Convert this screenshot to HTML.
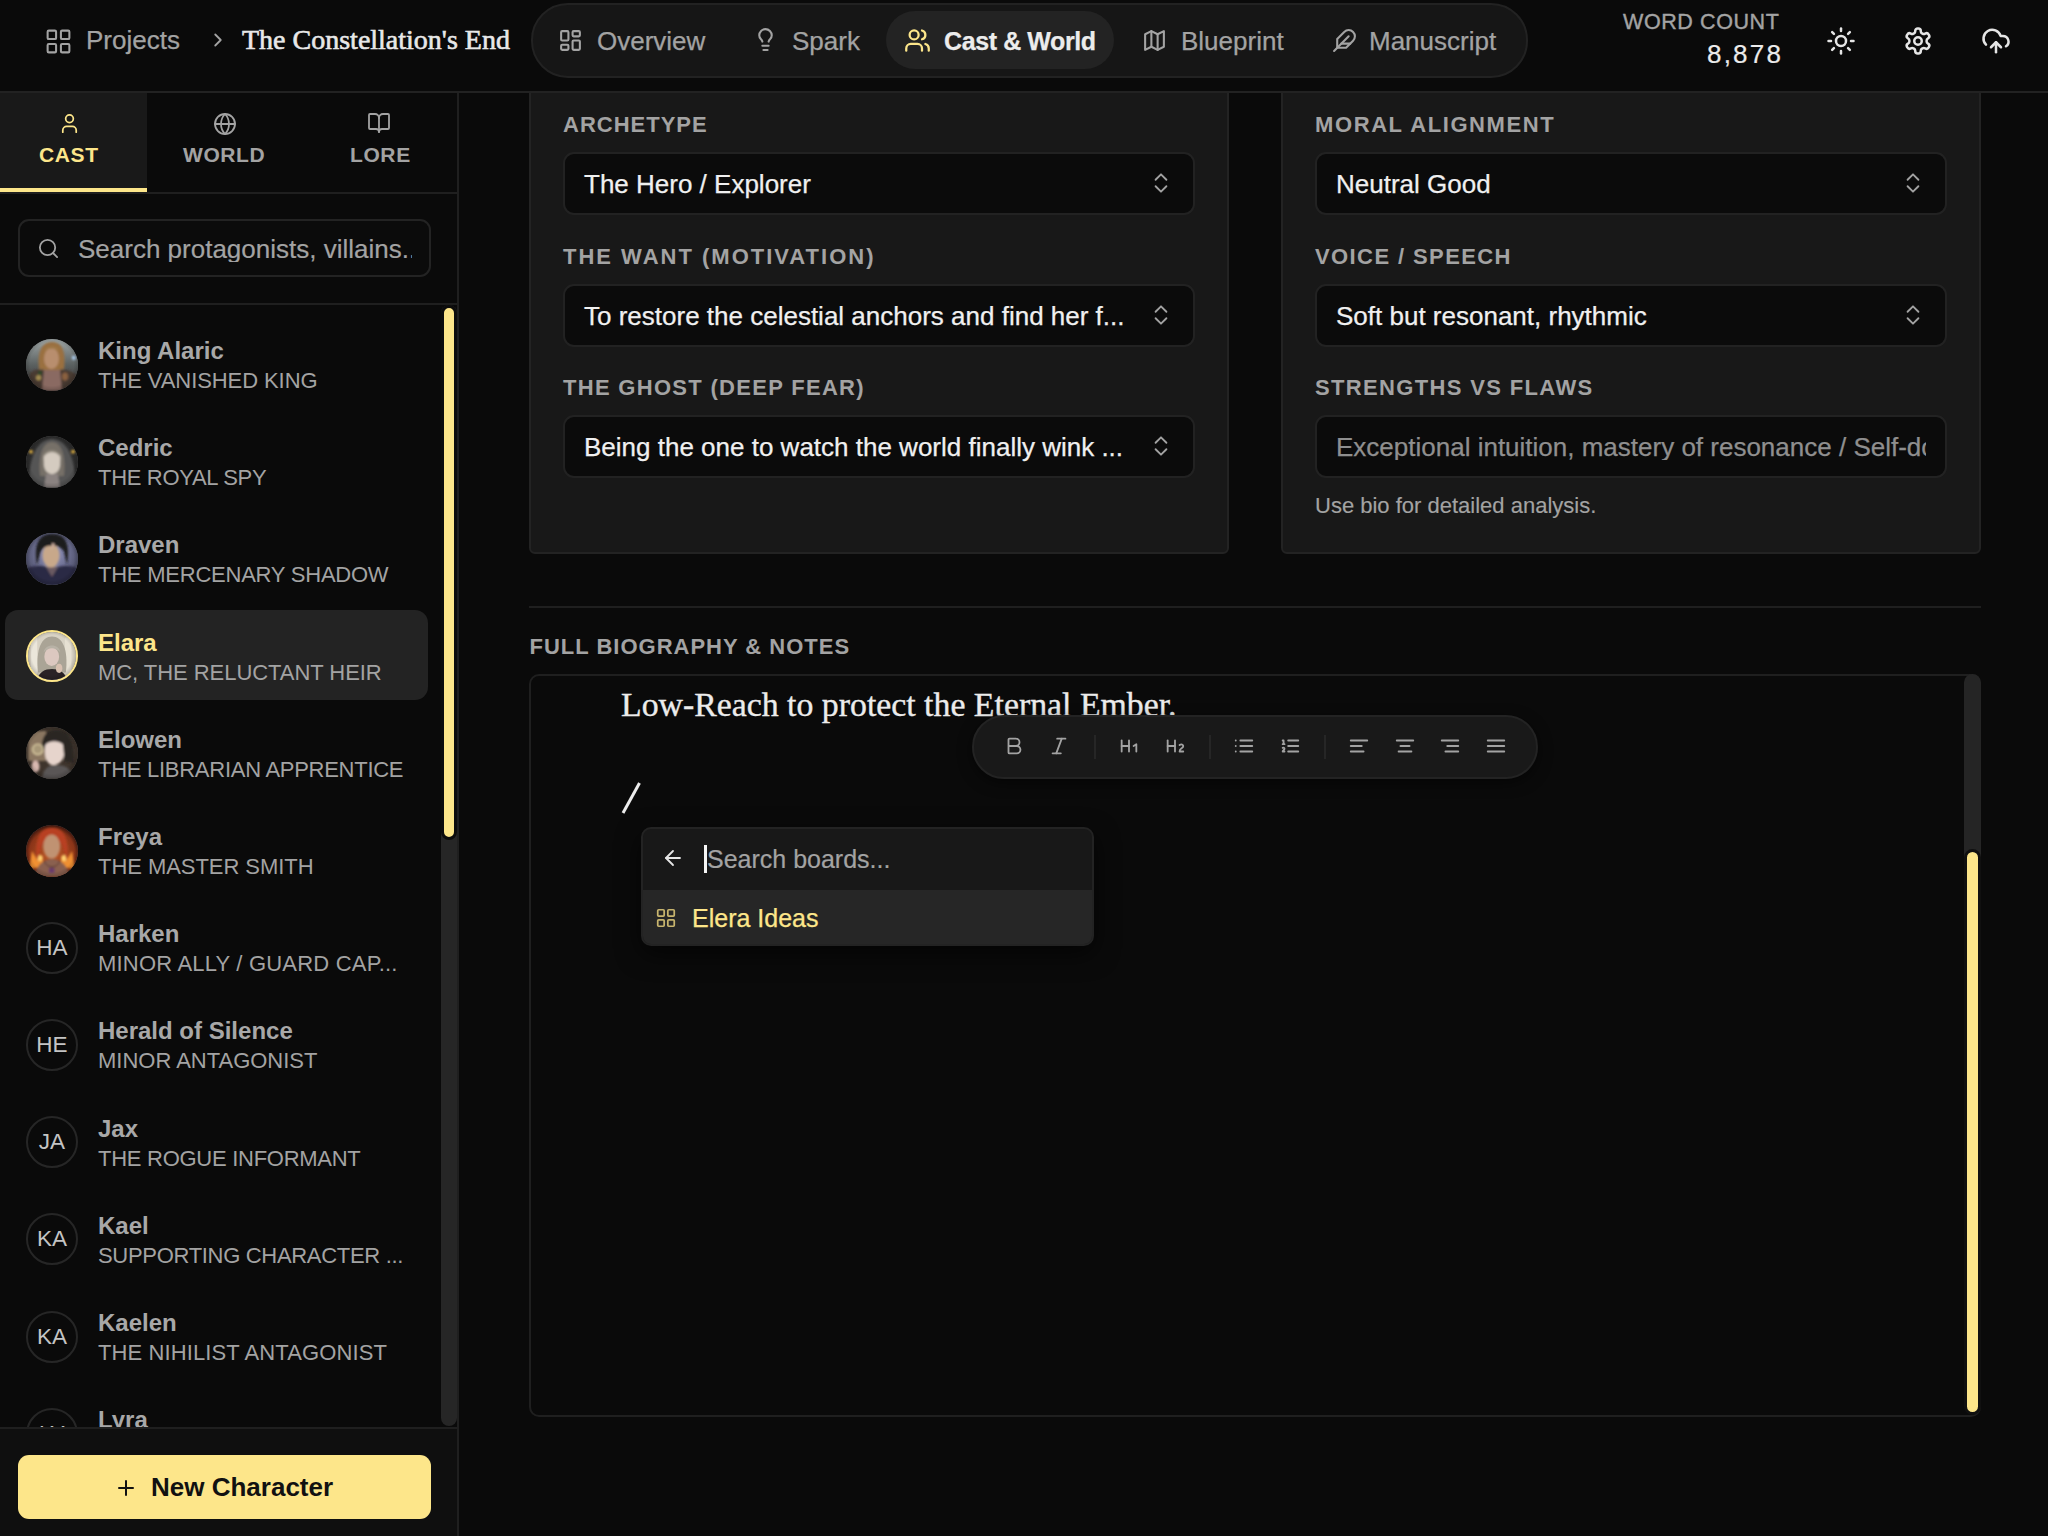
<!DOCTYPE html>
<html><head><meta charset="utf-8">
<style>
*{box-sizing:border-box;margin:0;padding:0}
html,body{width:2048px;height:1536px;overflow:hidden;background:#0a0a0a;font-family:"Liberation Sans",sans-serif;color:#e5e5e5}
.abs{position:absolute}
svg.i{fill:none;stroke:currentColor;stroke-width:2;stroke-linecap:round;stroke-linejoin:round;position:absolute}
.t{position:absolute;white-space:nowrap;line-height:1}
/* header */
#hdr{position:absolute;left:0;top:0;width:2048px;height:93px;background:#0a0a0a;border-bottom:2px solid #222}
#nav{position:absolute;left:531px;top:3px;width:997px;height:75px;border-radius:37px;background:#161616;border:2px solid #222}
#navact{position:absolute;left:886px;top:11px;width:228px;height:58px;border-radius:29px;background:#232323}
.nv{color:#a3a3a3;font-size:26px;-webkit-text-stroke:0.25px currentColor}
/* sidebar */
#side{position:absolute;left:0;top:93px;width:459px;height:1443px;background:#0a0a0a;border-right:2px solid #1f1f1f}
.tab{font-size:21px;font-weight:bold;letter-spacing:0.6px;color:#a3a3a3}
.av{position:absolute;left:26px;width:52px;height:52px;border-radius:50%;overflow:hidden;background:#555}
.av svg{display:block;width:100%;height:100%}
.av:not(.avi)::after{content:"";position:absolute;inset:0;border-radius:50%;background:radial-gradient(circle at 50% 48%,rgba(0,0,0,0) 58%,rgba(0,0,0,.6) 100%)}
.avi{background:#0a0a0a;border:2px solid #262626;color:#c4c4c4;font-size:22.5px;text-align:center;line-height:47px}
.nm{left:98px;font-size:24px;font-weight:bold;color:#a8a8a8}
.rl{left:98px;font-size:22px;color:#a3a3a3;letter-spacing:-0.25px}
.card{position:absolute;width:700px;background:#181818;border:2px solid #232323;border-radius:6px}
.lbl{font-size:22px;font-weight:bold;color:#a3a3a3}
.sel{position:absolute;width:632px;height:63px;background:#0b0b0b;border:2px solid #222;border-radius:11px}
.stx{font-size:26px;-webkit-text-stroke:0.25px currentColor}
</style></head>
<body>
<svg width="0" height="0" style="position:absolute"><defs><filter id="bl" x="-10%" y="-10%" width="120%" height="120%"><feGaussianBlur stdDeviation="0.8"/></filter></defs></svg>
<div id="hdr">
  <svg class="i" style="left:44px;top:26.5px;width:29px;height:29px;color:#a3a3a3;stroke-width:1.7" viewBox="0 0 24 24"><rect width="7" height="7" x="3" y="3" rx="1"/><rect width="7" height="7" x="14" y="3" rx="1"/><rect width="7" height="7" x="14" y="14" rx="1"/><rect width="7" height="7" x="3" y="14" rx="1"/></svg>
  <div class="t nv" style="left:86px;top:27.2px">Projects</div>
  <svg class="i" style="left:207px;top:29px;width:22px;height:22px;color:#a3a3a3" viewBox="0 0 24 24"><path d="m9 18 6-6-6-6"/></svg>
  <div class="t" id="title" style="left:242px;top:26.3px;font-family:'Liberation Serif',serif;font-size:28px;letter-spacing:0px;color:#e8e8e8;-webkit-text-stroke:0.6px #e8e8e8">The Constellation's End</div>

  <div id="nav"></div>
  <div id="navact"></div>
  <svg class="i" style="left:558px;top:28px;width:25px;height:25px;color:#a3a3a3" viewBox="0 0 24 24"><rect width="7" height="9" x="3" y="3" rx="1"/><rect width="7" height="5" x="14" y="3" rx="1"/><rect width="7" height="9" x="14" y="12" rx="1"/><rect width="7" height="5" x="3" y="16" rx="1"/></svg>
  <div class="t nv" style="left:597px;top:28px">Overview</div>
  <svg class="i" style="left:753px;top:27px;width:25px;height:25px;color:#a3a3a3" viewBox="0 0 24 24"><path d="M15 14c.2-1 .7-1.7 1.5-2.5 1-.9 1.5-2.2 1.5-3.5A6 6 0 0 0 6 8c0 1 .2 2.2 1.5 3.5.7.7 1.3 1.5 1.5 2.5"/><path d="M9 18h6"/><path d="M10 22h4"/></svg>
  <div class="t nv" style="left:792px;top:28px">Spark</div>
  <svg class="i" style="left:904px;top:27px;width:27px;height:27px;color:#fde68a" viewBox="0 0 24 24"><path d="M16 21v-2a4 4 0 0 0-4-4H6a4 4 0 0 0-4 4v2"/><circle cx="9" cy="7" r="4"/><path d="M22 21v-2a4 4 0 0 0-3-3.87"/><path d="M16 3.13a4 4 0 0 1 0 7.75"/></svg>
  <div class="t nv" style="left:944px;top:28.5px;color:#ececec;font-weight:bold;font-size:25px;letter-spacing:-0.4px">Cast &amp; World</div>
  <svg class="i" style="left:1142px;top:28px;width:25px;height:25px;color:#a3a3a3" viewBox="0 0 24 24"><polygon points="3 6 9 3 15 6 21 3 21 18 15 21 9 18 3 21"/><line x1="9" x2="9" y1="3" y2="18"/><line x1="15" x2="15" y1="6" y2="21"/></svg>
  <div class="t nv" style="left:1181px;top:28px">Blueprint</div>
  <svg class="i" style="left:1332px;top:28px;width:25px;height:25px;color:#a3a3a3" viewBox="0 0 24 24"><path d="M20.24 12.24a6 6 0 0 0-8.49-8.49L5 10.5V19h8.5z"/><line x1="16" x2="2" y1="8" y2="22"/><line x1="17.5" x2="9" y1="15" y2="15"/></svg>
  <div class="t nv" style="left:1369px;top:28px">Manuscript</div>

  <div class="t" style="left:1623px;top:12.4px;font-size:21.5px;letter-spacing:0.6px;color:#a3a3a3;-webkit-text-stroke:0.4px currentColor">WORD COUNT</div>
  <div class="t" style="left:1707px;top:41px;font-size:26px;letter-spacing:2.2px;color:#ececec;-webkit-text-stroke:0.2px currentColor">8,878</div>
  <svg class="i" style="left:1826px;top:26px;width:30px;height:30px;color:#e5e5e5" viewBox="0 0 24 24"><circle cx="12" cy="12" r="4"/><path d="M12 2v2"/><path d="M12 20v2"/><path d="m4.93 4.93 1.410 1.410"/><path d="m17.66 17.66 1.410 1.410"/><path d="M2 12h2"/><path d="M20 12h2"/><path d="m6.34 17.66-1.410 1.410"/><path d="m19.07 4.93-1.410 1.410"/></svg>
  <svg class="i" style="left:1903px;top:26px;width:30px;height:30px;color:#e5e5e5" viewBox="0 0 24 24"><path d="M12.22 2h-.44a2 2 0 0 0-2 2v.18a2 2 0 0 1-1 1.73l-.43.25a2 2 0 0 1-2 0l-.15-.08a2 2 0 0 0-2.73.73l-.22.38a2 2 0 0 0 .73 2.73l.15.1a2 2 0 0 1 1 1.72v.51a2 2 0 0 1-1 1.74l-.15.09a2 2 0 0 0-.73 2.73l.22.38a2 2 0 0 0 2.73.73l.15-.08a2 2 0 0 1 2 0l.43.25a2 2 0 0 1 1 1.73V20a2 2 0 0 0 2 2h.44a2 2 0 0 0 2-2v-.18a2 2 0 0 1 1-1.73l.43-.25a2 2 0 0 1 2 0l.15.08a2 2 0 0 0 2.73-.73l.22-.39a2 2 0 0 0-.73-2.730l-.15-.08a2 2 0 0 1-1-1.74v-.5a2 2 0 0 1 1-1.74l.15-.09a2 2 0 0 0 .73-2.73l-.22-.38a2 2 0 0 0-2.73-.73l-.15.08a2 2 0 0 1-2 0l-.43-.25a2 2 0 0 1-1-1.73V4a2 2 0 0 0-2-2z"/><circle cx="12" cy="12" r="3"/></svg>
  <svg class="i" style="left:1981px;top:26px;width:30px;height:30px;color:#e5e5e5" viewBox="0 0 24 24"><path d="M12 13v8"/><path d="M4 14.899A7 7 0 1 1 15.71 8h1.79a4.5 4.5 0 0 1 2.5 8.242"/><path d="m8 17 4-4 4 4"/></svg>
</div>

<div id="side">
</div>
<div class="abs" style="left:0;top:93px;width:147px;height:99px;background:#191919"></div>
<div class="abs" style="left:0;top:188px;width:147px;height:4px;background:#fde68a"></div>
<div class="abs" style="left:0;top:192px;width:457px;height:2px;background:#1f1f1f"></div>
<svg class="i" style="left:58px;top:112px;width:23px;height:23px;color:#fde68a;stroke-width:1.8" viewBox="0 0 24 24"><path d="M19 21v-2a4 4 0 0 0-4-4H9a4 4 0 0 0-4 4v2"/><circle cx="12" cy="7" r="4"/></svg>
<div class="t tab" style="left:39px;top:144px;color:#fde68a">CAST</div>
<svg class="i" style="left:213px;top:112px;width:24px;height:24px;color:#a3a3a3;stroke-width:1.8" viewBox="0 0 24 24"><circle cx="12" cy="12" r="10"/><path d="M12 2a14.5 14.5 0 0 0 0 20 14.5 14.5 0 0 0 0-20"/><path d="M2 12h20"/></svg>
<div class="t tab" style="left:183px;top:144px">WORLD</div>
<svg class="i" style="left:367px;top:111px;width:24px;height:24px;color:#a3a3a3;stroke-width:1.8" viewBox="0 0 24 24"><path d="M12 7v14"/><path d="M3 18a1 1 0 0 1-1-1V4a1 1 0 0 1 1-1h5a4 4 0 0 1 4 4 4 4 0 0 1 4-4h5a1 1 0 0 1 1 1v13a1 1 0 0 1-1 1h-6a3 3 0 0 0-3 3 3 3 0 0 0-3-3z"/></svg>
<div class="t tab" style="left:350px;top:144px">LORE</div>

<div class="abs" style="left:18px;top:219px;width:413px;height:58px;border:2px solid #232323;border-radius:11px;background:#0b0b0b"></div>
<svg class="i" style="left:37px;top:237px;width:23px;height:23px;color:#a3a3a3;stroke-width:1.9" viewBox="0 0 24 24"><circle cx="11" cy="11" r="8"/><path d="m21 21-4.3-4.3"/></svg>
<div class="t" style="left:78px;top:235.5px;font-size:26px;color:#a3a3a3;width:334px;overflow:hidden;-webkit-text-stroke:0.2px currentColor">Search protagonists, villains...</div>
<div class="abs" style="left:0;top:303px;width:457px;height:2px;background:#1f1f1f"></div>

<div id="list" class="abs" style="left:0;top:305px;width:457px;height:1122px;overflow:hidden">
<div class="abs" style="left:441px;top:0;width:16px;height:1121px;background:#262626;border-radius:8px"></div>
<div class="abs" style="left:441px;top:0;width:16px;height:535px;background:#fde68a;border:3px solid #0c0c0c;border-radius:8px"></div>
<div class="abs" style="left:5px;top:305px;width:423px;height:90px;background:#232323;border-radius:13px"></div>
<div class="av img1" style="top:33.5px"><svg viewBox="0 0 52 52"><defs><linearGradient id="g1" x1="0" y1="0" x2="0" y2="1"><stop offset="0" stop-color="#a0a8a8"/><stop offset=".5" stop-color="#5a6060"/><stop offset="1" stop-color="#302828"/></linearGradient></defs>
<rect width="52" height="52" fill="url(#g1)"/><g filter="url(#bl)">
<path d="M2 52 L4 34 C8 30 14 30 18 31 L34 31 C40 30 46 32 50 36 L50 52 Z" fill="#4a3a32"/>
<path d="M18 31 L34 31 L36 52 L16 52 Z" fill="#8a6a62"/>
<path d="M13 30 C11 12 16 3 26 3 C36 3 40 12 38 30 L33 31 L19 31 Z" fill="#9a7040"/>
<ellipse cx="25.5" cy="19.5" rx="7.5" ry="10.5" fill="#b88e6e"/>
<path d="M18 12 C20 6 32 6 34 12 C30 9 22 9 18 12 Z" fill="#a07a48"/>
<circle cx="48" cy="18.7" r="2.2" fill="#a8c8e8"/>
<circle cx="12.6" cy="38.7" r="2.6" fill="#a08a50"/>
<ellipse cx="39" cy="37.6" rx="3" ry="4" fill="#8a6040"/>
<circle cx="14" cy="34" r="2" fill="#2a4a2a"/>
</g></svg></div>
<div class="t nm" style="top:34.0px">King Alaric</div>
<div class="t rl" style="top:65.0px;letter-spacing:-0.08px">THE VANISHED KING</div>
<div class="av img2" style="top:130.7px"><svg viewBox="0 0 52 52"><rect width="52" height="52" fill="#2c2c2c"/><g filter="url(#bl)">
<path d="M3 52 C2 28 8 4 26 3 C44 4 50 28 49 52 Z" fill="#555555"/>
<path d="M14 40 C12 18 17 6 26 6 C35 6 40 18 38 40 Z" fill="#767068"/>
<path d="M17.5 20 C18 14 34 14 34.5 20 L34 30 C33 36 29 38 26 38 C23 38 19 36 18 30 Z" fill="#d4cbc0"/>
<path d="M17 22 C18 11 34 11 35 22 C31 14 21 14 17 22 Z" fill="#8a8478"/>
<path d="M20 38 L32 38 L34 52 L18 52 Z" fill="#8a8280"/>
<circle cx="4.8" cy="15.7" r="1.9" fill="#e0b040"/><circle cx="47.2" cy="15.7" r="1.9" fill="#e0b040"/>
</g></svg></div>
<div class="t nm" style="top:131.2px">Cedric</div>
<div class="t rl" style="top:162.2px;letter-spacing:-0.31px">THE ROYAL SPY</div>
<div class="av img3" style="top:227.9px"><svg viewBox="0 0 52 52"><defs><radialGradient id="g3" cx="50%" cy="40%" r="60%"><stop offset="0" stop-color="#9a9cc8"/><stop offset="1" stop-color="#44465e"/></radialGradient></defs>
<rect width="52" height="52" fill="url(#g3)"/><g filter="url(#bl)">
<path d="M0 52 L0 36 C8 32 16 33 20 34 L32 34 C38 33 46 32 52 36 L52 52 Z" fill="#2c2a44"/>
<path d="M20 34 L32 34 L26 44 Z" fill="#6a5a62"/>
<ellipse cx="25" cy="22.5" rx="8.5" ry="12" fill="#c8a88a"/>
<path d="M11 32 C7 8 15 1 26 1 C38 1 45 8 41 32 L38 18 C34 13 30 12 26 13 C22 12 16 14 14 20 Z" fill="#1a1a1e"/>
<path d="M26 10 L29 11 L25 18 Z" fill="#d0b0a0"/>
</g></svg></div>
<div class="t nm" style="top:228.4px">Draven</div>
<div class="t rl" style="top:259.4px;letter-spacing:-0.23px">THE MERCENARY SHADOW</div>
<div class="av img4" style="top:325.1px;border:2px solid #fde68a"><svg viewBox="0 0 52 52"><rect width="52" height="52" fill="#d8d2c4"/><g filter="url(#bl)">
<rect x="3" y="6" width="7" height="40" fill="#ebe6da"/><rect x="40" y="6" width="7" height="40" fill="#e6e0d2"/>
<path d="M11 44 C8 18 15 5 26 5 C37 5 44 18 41 44 Z" fill="#aaa496"/>
<ellipse cx="25.7" cy="26.7" rx="8" ry="10" fill="#dcc8c0"/>
<path d="M17 22 C18 12 34 12 35 22 C30 16 22 16 17 22 Z" fill="#b8b2a6"/>
<path d="M10 52 C12 43 18 40 26 40 C34 40 40 43 42 52 Z" fill="#2a2426"/>
<ellipse cx="33.7" cy="39.4" rx="3.5" ry="5" fill="#d8c0b0"/>
</g></svg></div>
<div class="t nm" style="top:325.6px;color:#fde68a">Elara</div>
<div class="t rl" style="top:356.6px;letter-spacing:-0.05px">MC, THE RELUCTANT HEIR</div>
<div class="av img5" style="top:422.3px"><svg viewBox="0 0 52 52"><rect width="52" height="52" fill="#3e342c"/><g filter="url(#bl)">
<rect x="2" y="4" width="18" height="30" fill="#8a7660"/>
<path d="M16 26 C14 8 22 2 32 3 C44 4 48 14 48 36 L38 34 C38 20 32 14 22 16 Z" fill="#2a2624"/>
<path d="M19 20 C19 12 34 10 37 18 L38 28 C37 35 31 38 27 38 C22 38 19 32 19 26 Z" fill="#e6d4cc"/>
<path d="M19 18 C22 10 34 8 38 18 C32 13 24 13 19 18 Z" fill="#2e2826"/>
<circle cx="11.8" cy="22.3" r="5.2" fill="#a89878" stroke="#d8c8a0" stroke-width="1.4"/>
<ellipse cx="9.5" cy="39.5" rx="4" ry="6" fill="#d8b8b0"/>
<path d="M16 52 C17 42 22 38 30 38 C40 38 46 42 48 52 Z" fill="#5a5656"/>
</g></svg></div>
<div class="t nm" style="top:422.8px">Elowen</div>
<div class="t rl" style="top:453.8px;letter-spacing:-0.27px">THE LIBRARIAN APPRENTICE</div>
<div class="av img6" style="top:519.5px"><svg viewBox="0 0 52 52"><defs><radialGradient id="g6" cx="50%" cy="55%" r="55%"><stop offset="0" stop-color="#c05a28"/><stop offset=".8" stop-color="#8a3418"/><stop offset="1" stop-color="#401810"/></radialGradient></defs>
<rect width="52" height="52" fill="url(#g6)"/><g filter="url(#bl)">
<path d="M3 44 L6 26 L12 36 L16 30 L18 42 Z" fill="#f09030"/><path d="M49 44 L46 26 L40 36 L36 30 L34 42 Z" fill="#f09030"/>
<circle cx="13.7" cy="33" r="3" fill="#ffd070"/><circle cx="38.3" cy="33" r="3" fill="#ffd070"/>
<path d="M11 36 C8 10 16 3 26 3 C36 3 44 10 41 36 L36 20 C32 13 20 13 16 20 Z" fill="#b84020"/>
<ellipse cx="25.7" cy="21.5" rx="8.5" ry="12" fill="#c09272"/>
<path d="M8 52 C10 40 18 34 26 34 C34 34 42 40 44 52 Z" fill="#8a6050"/>
<path d="M18 36 C22 44 30 44 34 36" stroke="#4a3028" stroke-width="1" fill="none"/>
<rect x="23" y="43" width="5.4" height="5" fill="#6a3a6a"/>
</g></svg></div>
<div class="t nm" style="top:520.0px">Freya</div>
<div class="t rl" style="top:551.0px;letter-spacing:-0.05px">THE MASTER SMITH</div>
<div class="av avi" style="top:616.7px">HA</div>
<div class="t nm" style="top:617.2px">Harken</div>
<div class="t rl" style="top:648.2px;letter-spacing:0.2px">MINOR ALLY / GUARD CAP...</div>
<div class="av avi" style="top:713.9px">HE</div>
<div class="t nm" style="top:714.4px">Herald of Silence</div>
<div class="t rl" style="top:745.4px;letter-spacing:-0.01px">MINOR ANTAGONIST</div>
<div class="av avi" style="top:811.1px">JA</div>
<div class="t nm" style="top:811.6px">Jax</div>
<div class="t rl" style="top:842.6px;letter-spacing:-0.27px">THE ROGUE INFORMANT</div>
<div class="av avi" style="top:908.3px">KA</div>
<div class="t nm" style="top:908.8px">Kael</div>
<div class="t rl" style="top:939.8px;letter-spacing:-0.31px">SUPPORTING CHARACTER ...</div>
<div class="av avi" style="top:1005.5px">KA</div>
<div class="t nm" style="top:1006.0px">Kaelen</div>
<div class="t rl" style="top:1037.0px;letter-spacing:0.11px">THE NIHILIST ANTAGONIST</div>
<div class="av avi" style="top:1102.7px">LY</div>
<div class="t nm" style="top:1103.2px">Lyra</div>
</div>
<div class="abs" style="left:0;top:1427px;width:457px;height:109px;background:#0f0f0f;border-top:2px solid #1f1f1f"></div>
<div class="abs" style="left:18px;top:1455px;width:413px;height:64px;background:#fde68a;border-radius:11px"></div>
<svg class="i" style="left:114px;top:1476px;width:24px;height:24px;color:#111;stroke-width:2" viewBox="0 0 24 24"><path d="M5 12h14"/><path d="M12 5v14"/></svg>
<div class="t" style="left:151px;top:1474px;font-size:26px;font-weight:bold;color:#111">New Character</div>

<div id="main" class="abs" style="left:0;top:93px;width:2048px;height:1443px;overflow:hidden;clip-path:inset(0 0 0 459px)">
<div class="abs" style="left:0;top:-93px;width:2048px;height:1536px">
<div class="card" style="left:529px;top:60px;height:494px"></div>
<div class="card" style="left:1281px;top:60px;height:494px"></div>
<div class="t lbl" style="left:563px;top:114.4px;letter-spacing:1px">ARCHETYPE</div>
<div class="sel" style="left:563px;top:152px"></div>
<div class="t stx" style="left:584px;top:171.4px;color:#f0f0f0">The Hero / Explorer</div>
<svg class="i" style="left:1148px;top:170px;width:26px;height:26px;color:#a3a3a3;stroke-width:1.7" viewBox="0 0 24 24"><path d="m7 15 5 5 5-5"/><path d="m7 9 5-5 5 5"/></svg>
<div class="t lbl" style="left:1315px;top:114.4px;letter-spacing:1.6px">MORAL ALIGNMENT</div>
<div class="sel" style="left:1315px;top:152px"></div>
<div class="t stx" style="left:1336px;top:171.4px;color:#f0f0f0">Neutral Good</div>
<svg class="i" style="left:1900px;top:170px;width:26px;height:26px;color:#a3a3a3;stroke-width:1.7" viewBox="0 0 24 24"><path d="m7 15 5 5 5-5"/><path d="m7 9 5-5 5 5"/></svg>
<div class="t lbl" style="left:563px;top:245.9px;letter-spacing:2px">THE WANT (MOTIVATION)</div>
<div class="sel" style="left:563px;top:284px"></div>
<div class="t stx" style="left:584px;top:303.4px;color:#f0f0f0">To restore the celestial anchors and find her f...</div>
<svg class="i" style="left:1148px;top:302px;width:26px;height:26px;color:#a3a3a3;stroke-width:1.7" viewBox="0 0 24 24"><path d="m7 15 5 5 5-5"/><path d="m7 9 5-5 5 5"/></svg>
<div class="t lbl" style="left:1315px;top:245.9px;letter-spacing:1.4px">VOICE / SPEECH</div>
<div class="sel" style="left:1315px;top:284px"></div>
<div class="t stx" style="left:1336px;top:303.4px;color:#f0f0f0">Soft but resonant, rhythmic</div>
<svg class="i" style="left:1900px;top:302px;width:26px;height:26px;color:#a3a3a3;stroke-width:1.7" viewBox="0 0 24 24"><path d="m7 15 5 5 5-5"/><path d="m7 9 5-5 5 5"/></svg>
<div class="t lbl" style="left:563px;top:377.4px;letter-spacing:1.3px">THE GHOST (DEEP FEAR)</div>
<div class="sel" style="left:563px;top:415px"></div>
<div class="t stx" style="left:584px;top:434.4px;color:#f0f0f0">Being the one to watch the world finally wink ...</div>
<svg class="i" style="left:1148px;top:433px;width:26px;height:26px;color:#a3a3a3;stroke-width:1.7" viewBox="0 0 24 24"><path d="m7 15 5 5 5-5"/><path d="m7 9 5-5 5 5"/></svg>
<div class="t lbl" style="left:1315px;top:377.4px;letter-spacing:1.35px">STRENGTHS VS FLAWS</div>
<div class="sel" style="left:1315px;top:415px"></div>
<div class="t stx" style="left:1336px;top:434.4px;color:#8f8f8f;width:590px;overflow:hidden">Exceptional intuition, mastery of resonance / Self-doubt, fear of the dark</div>
<div class="t" style="left:1315px;top:495.4px;font-size:22px;color:#a3a3a3;-webkit-text-stroke:0.15px currentColor">Use bio for detailed analysis.</div>
<div class="abs" style="left:529px;top:606px;width:1452px;height:2px;background:#1f1f1f"></div>
<div class="t lbl" style="left:529.5px;top:636.3px;letter-spacing:1px">FULL BIOGRAPHY &amp; NOTES</div>
<div class="abs" style="left:529px;top:674px;width:1452px;height:743px;border:2px solid #1f1f1f;border-radius:10px;background:#0a0a0a;overflow:hidden">
</div>
<div class="abs" style="left:1964px;top:674px;width:17px;height:200px;background:#252525;border-radius:9px 9px 0 0"></div>
<div class="abs" style="left:1964px;top:849px;width:17px;height:566px;background:#fde68a;border:3px solid #101010;border-radius:9px"></div>
<div class="t" style="left:621px;top:688.2px;font-family:'Liberation Serif',serif;font-size:33.8px;color:#ececec;-webkit-text-stroke:0.35px #ececec">Low-Reach to protect the Eternal Ember.</div>
<svg class="abs" style="left:615px;top:778px;width:32px;height:40px" viewBox="0 0 32 40"><path d="M8 35 L24.5 5" stroke="#ececec" stroke-width="3" stroke-linecap="butt"/></svg>
<div class="abs" style="left:972px;top:714.5px;width:566px;height:64px;border-radius:32px;background:#191919;border:2px solid #232323;box-shadow:0 4px 14px rgba(0,0,0,.5)"></div>
<svg class="i" style="left:1003px;top:735px;width:22px;height:22px;color:#a3a3a3;stroke-width:2" viewBox="0 0 24 24"><path d="M6 12h9a4 4 0 0 1 0 8H7a1 1 0 0 1-1-1V5a1 1 0 0 1 1-1h7a4 4 0 0 1 0 8"/></svg>
<svg class="i" style="left:1048px;top:735px;width:22px;height:22px;color:#a3a3a3;stroke-width:2" viewBox="0 0 24 24"><line x1="19" x2="10" y1="4" y2="4"/><line x1="14" x2="5" y1="20" y2="20"/><line x1="15" x2="9" y1="4" y2="20"/></svg>
<svg class="i" style="left:1118px;top:735px;width:22px;height:22px;color:#a3a3a3;stroke-width:2" viewBox="0 0 24 24"><path d="M4 12h8"/><path d="M4 18V6"/><path d="M12 18V6"/><path d="m17 12 3-2v8"/></svg>
<svg class="i" style="left:1164px;top:735px;width:22px;height:22px;color:#a3a3a3;stroke-width:2" viewBox="0 0 24 24"><path d="M4 12h8"/><path d="M4 18V6"/><path d="M12 18V6"/><path d="M21 18h-4c0-4 4-3 4-6 0-1.5-2-2.5-4-1"/></svg>
<svg class="i" style="left:1233px;top:735px;width:22px;height:22px;color:#a3a3a3;stroke-width:2" viewBox="0 0 24 24"><path d="M3 12h.01"/><path d="M3 18h.01"/><path d="M3 6h.01"/><path d="M8 12h13"/><path d="M8 18h13"/><path d="M8 6h13"/></svg>
<svg class="i" style="left:1279px;top:735px;width:22px;height:22px;color:#a3a3a3;stroke-width:2" viewBox="0 0 24 24"><path d="M10 12h11"/><path d="M10 18h11"/><path d="M10 6h11"/><path d="M4 10h2"/><path d="M4 6h1v4"/><path d="M6 18H4c0-1 2-2 2-3s-1-1.5-2-1"/></svg>
<svg class="i" style="left:1348px;top:735px;width:22px;height:22px;color:#a3a3a3;stroke-width:2" viewBox="0 0 24 24"><path d="M15 12H3"/><path d="M17 18H3"/><path d="M21 6H3"/></svg>
<svg class="i" style="left:1394px;top:735px;width:22px;height:22px;color:#a3a3a3;stroke-width:2" viewBox="0 0 24 24"><path d="M17 12H7"/><path d="M19 18H5"/><path d="M21 6H3"/></svg>
<svg class="i" style="left:1439px;top:735px;width:22px;height:22px;color:#a3a3a3;stroke-width:2" viewBox="0 0 24 24"><path d="M21 12H9"/><path d="M21 18H7"/><path d="M21 6H3"/></svg>
<svg class="i" style="left:1485px;top:735px;width:22px;height:22px;color:#a3a3a3;stroke-width:2" viewBox="0 0 24 24"><path d="M3 12h18"/><path d="M3 18h18"/><path d="M3 6h18"/></svg>
<div class="abs" style="left:1094px;top:735px;width:2px;height:24px;background:#262626"></div>
<div class="abs" style="left:1209px;top:735px;width:2px;height:24px;background:#262626"></div>
<div class="abs" style="left:1324px;top:735px;width:2px;height:24px;background:#262626"></div>
<div class="abs" style="left:641px;top:827px;width:453px;height:119px;border:2px solid #232323;border-radius:10px;background:#181818;overflow:hidden;box-shadow:0 8px 24px rgba(0,0,0,.6)">
  <div class="abs" style="left:0;top:61px;width:451px;height:56px;background:#262626"></div>
</div>
<svg class="i" style="left:661px;top:846px;width:24px;height:24px;color:#e5e5e5;stroke-width:1.8" viewBox="0 0 24 24"><path d="m12 19-7-7 7-7"/><path d="M19 12H5"/></svg>
<div class="abs" style="left:704px;top:845px;width:3px;height:28px;background:#f5f5f5"></div>
<div class="t" style="left:707px;top:847px;font-size:25px;color:#a3a3a3;-webkit-text-stroke:0.2px currentColor">Search boards...</div>
<svg class="i" style="left:655px;top:907px;width:22px;height:22px;color:#c8b56e;stroke-width:1.9" viewBox="0 0 24 24"><rect width="7" height="7" x="3" y="3" rx="1"/><rect width="7" height="7" x="14" y="3" rx="1"/><rect width="7" height="7" x="14" y="14" rx="1"/><rect width="7" height="7" x="3" y="14" rx="1"/></svg>
<div class="t" style="left:692px;top:906px;font-size:25px;color:#fde68a;-webkit-text-stroke:0.25px currentColor">Elera Ideas</div>
</div>
</div>

</body></html>
